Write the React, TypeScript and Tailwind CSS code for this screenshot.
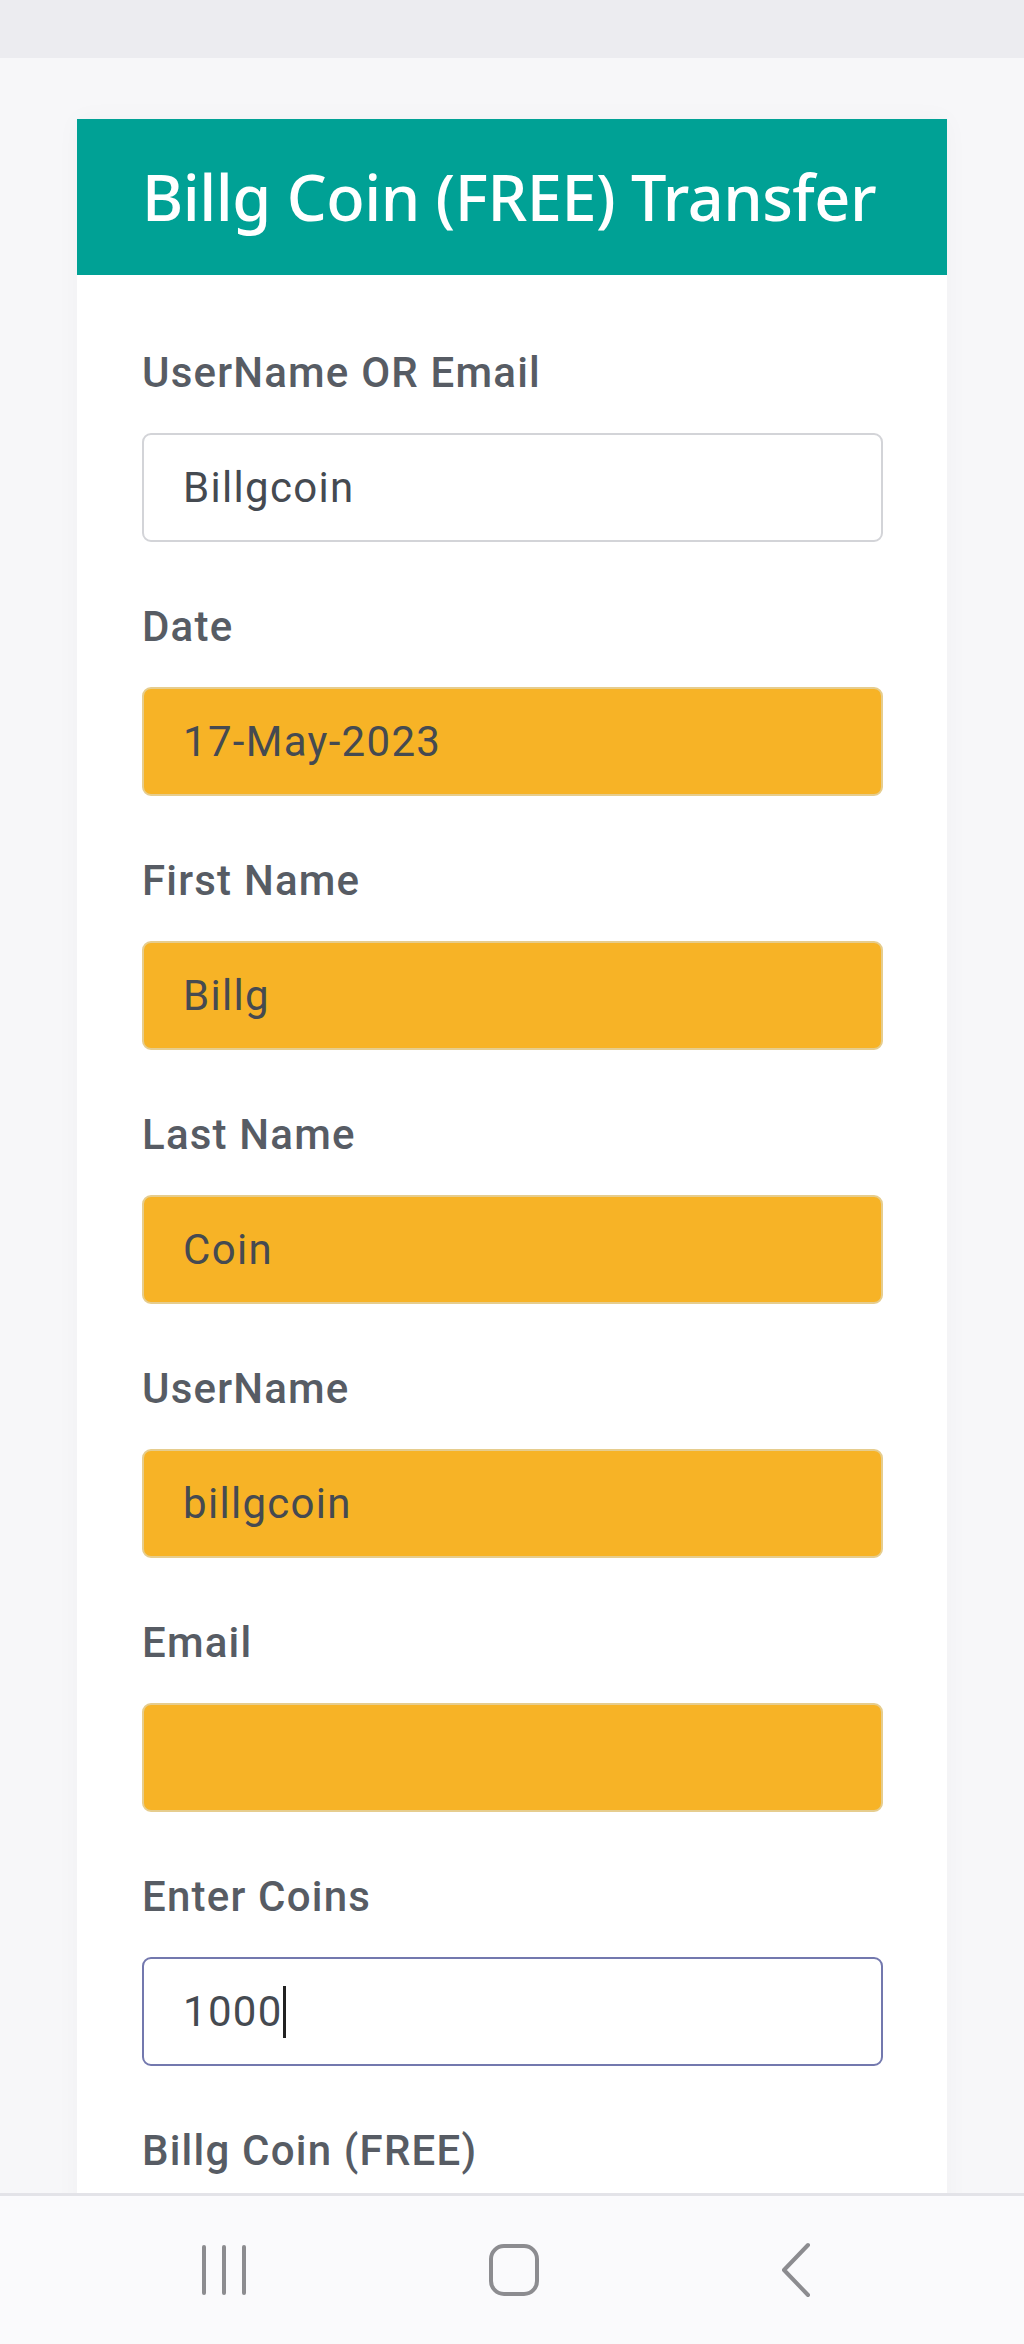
import React from 'react';

const fields: { label: string; value: string; kind: 'plain' | 'filled' | 'focus' }[] = [
  { label: 'UserName OR Email', value: 'Billgcoin', kind: 'plain' },
  { label: 'Date', value: '17-May-2023', kind: 'filled' },
  { label: 'First Name', value: 'Billg', kind: 'filled' },
  { label: 'Last Name', value: 'Coin', kind: 'filled' },
  { label: 'UserName', value: 'billgcoin', kind: 'filled' },
  { label: 'Email', value: '', kind: 'filled' },
  { label: 'Enter Coins', value: '1000', kind: 'focus' },
  { label: 'Billg Coin (FREE)', value: '', kind: 'plain' },
];

const boxStyles = {
  plain: 'bg-white border-[#d3d4d8]',
  filled: 'bg-[#f7b326] border-[#e6cd8e]',
  focus: 'bg-white border-[#7378ae]',
};

const Field = ({ label, value, kind }: (typeof fields)[number]) => (
  <div className="mb-[60px]">
    <div className="text-[42px] leading-[50px] font-medium text-[#575c64] tracking-[1.2px]">{label}</div>
    <div
      className={`mt-[35px] h-[109px] rounded-[9px] border-[2px] flex items-center pl-[39px] text-[42px] text-[#454a51] tracking-[1.3px] ${boxStyles[kind]}`}
    >
      <span>{value}</span>
      {kind === 'focus' && <span className="w-[3px] h-[52px] bg-[#222]" />}
    </div>
  </div>
);

const NavBar = () => (
  <div className="h-[151px] shrink-0 bg-[#fafafc] border-t-[3px] border-[#e3e3e8] flex items-center justify-between pl-[200px] pr-[212px]">
    <svg width="48" height="52" viewBox="0 0 48 52" fill="none" stroke="#8c8c90" strokeWidth="4" strokeLinecap="round">
      <line x1="4" y1="3" x2="4" y2="49" />
      <line x1="24" y1="3" x2="24" y2="49" />
      <line x1="44" y1="3" x2="44" y2="49" />
    </svg>
    <svg width="52" height="54" viewBox="0 0 52 54" fill="none" stroke="#8c8c90" strokeWidth="4">
      <rect x="3" y="3" width="46" height="48" rx="13" />
    </svg>
    <svg width="32" height="56" viewBox="0 0 32 56" fill="none" stroke="#8c8c90" strokeWidth="4" strokeLinecap="round" strokeLinejoin="round">
      <polyline points="28,3 4,28 28,53" />
    </svg>
  </div>
);

export default function App() {
  return (
    <div className="h-[2344px] w-[1024px] flex flex-col bg-[#f7f7f9] overflow-hidden" style={{ fontFamily: 'Roboto, "Noto Sans", sans-serif' }}>
      <div className="h-[58px] shrink-0 bg-[#ececf0]" />
      <div className="flex-1 overflow-hidden pt-[61px]">
        <div className="ml-[77px] w-[870px] bg-white shadow-[0_0_24px_rgba(0,0,0,0.03)]">
          <div className="h-[156px] bg-[#00a195] flex items-center pl-[65px]">
            <h1 className="text-[63px] font-medium text-white tracking-[-0.5px]" style={{ fontFamily: '"Noto Sans", Roboto, sans-serif' }}>
              Billg Coin (FREE) Transfer
            </h1>
          </div>
          <div className="pt-[73px] pl-[65px] pr-[64px]">
            {fields.map((f) => (
              <Field key={f.label} {...f} />
            ))}
          </div>
        </div>
      </div>
      <NavBar />
    </div>
  );
}
